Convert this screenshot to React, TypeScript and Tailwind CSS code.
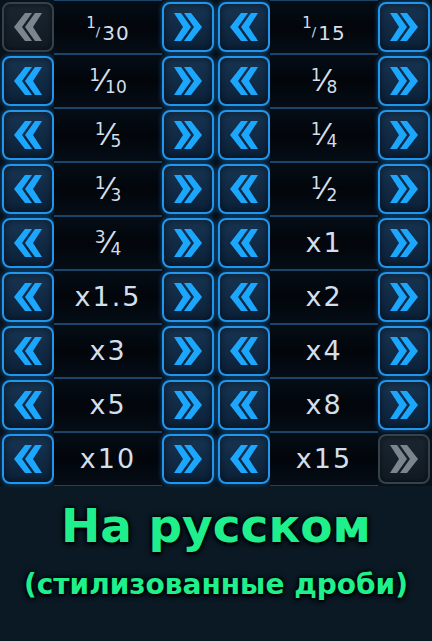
type Frac = { num: string; den: string; small?: boolean };
type Item = { label: string | Frac; prevOff?: boolean; nextOff?: boolean };

const ITEMS: Item[] = [
  { label: { num: "1", den: "30", small: true }, prevOff: true },
  { label: { num: "1", den: "15", small: true } },
  { label: { num: "1", den: "10" } },
  { label: { num: "1", den: "8" } },
  { label: { num: "1", den: "5" } },
  { label: { num: "1", den: "4" } },
  { label: { num: "1", den: "3" } },
  { label: { num: "1", den: "2" } },
  { label: { num: "3", den: "4" } },
  { label: "x1" },
  { label: "x1.5" },
  { label: "x2" },
  { label: "x3" },
  { label: "x4" },
  { label: "x5" },
  { label: "x8" },
  { label: "x10" },
  { label: "x15", nextOff: true },
];

function Chevrons({ dir, off }: { dir: "prev" | "next"; off?: boolean }) {
  const fill = off ? "#7b858e" : "#1ca7ff";
  return (
    <svg width="28" height="30" viewBox="0 0 28 30" className={dir === "next" ? "-scale-x-100" : ""}>
      <polygon points="0,15 11,1 18,1 8,15 18,29 11,29" fill={fill} />
      <polygon points="11,15 21,1 28,1 19,15 28,29 21,29" fill={fill} />
    </svg>
  );
}

function StepButton({ dir, off }: { dir: "prev" | "next"; off?: boolean }) {
  return (
    <button
      className={
        off
          ? "flex h-[50px] w-[52px] shrink-0 items-center justify-center rounded-[8px] border-2 border-[#35414b] bg-gradient-to-b from-[#1b2631] to-[#111a23] shadow-[inset_0_0_6px_rgba(0,0,0,0.6)]"
          : "flex h-[50px] w-[52px] shrink-0 items-center justify-center rounded-[8px] border-2 border-[#2196ee] bg-gradient-to-b from-[#173553] to-[#0c2139] shadow-[0_0_5px_rgba(30,140,230,0.6),inset_0_0_8px_rgba(0,0,0,0.55)]"
      }
    >
      <Chevrons dir={dir} off={off} />
    </button>
  );
}

function Label({ value }: { value: string | Frac }) {
  if (typeof value === "string") {
    return <span className="text-[27px] tracking-[2px] text-[#d3dfea]">{value}</span>;
  }
  if (value.small) {
    return (
      <span className="mt-[4px] flex items-start text-[#d3dfea]">
        <span className="text-[15px] leading-[15px]">{value.num}</span>
        <span className="mt-[9px] text-[13px] leading-[13px]">/</span>
        <span className="mt-[7px] pl-[2px] text-[20px] leading-[20px] tracking-[1px]">{value.den}</span>
      </span>
    );
  }
  // stacked fraction: raised numerator, tall slash, lowered denominator
  return (
    <span className="flex items-start text-[#d3dfea]">
      <span className="mt-[1px] text-[17px] leading-[17px]">{value.num}</span>
      <span className="text-[30px] leading-[30px]">⁄</span>
      <span className="mt-[13px] text-[17px] leading-[17px]">{value.den}</span>
    </span>
  );
}

export default function App() {
  return (
    <main
      className="h-[641px] w-[432px] overflow-hidden bg-[#0a1924]"
      style={{ fontFamily: '"DejaVu Sans", "Noto Sans", sans-serif' }}
    >
      <div className="grid grid-cols-2 bg-[#07121c]">
        {ITEMS.map((item, i) => (
          <div key={i} className="flex h-[54px] items-center px-[2px]">
            <StepButton dir="prev" off={item.prevOff} />
            <div className="flex h-full flex-1 items-center justify-center border-y border-[#1b4568] bg-gradient-to-b from-[#050d16] via-[#02060b] to-[#050d16]">
              <Label value={item.label} />
            </div>
            <StepButton dir="next" off={item.nextOff} />
          </div>
        ))}
      </div>

      <div className="flex flex-col items-center pt-[12px] font-bold text-[#1ff08d] [text-shadow:0_0_3px_#000,0_0_6px_#000,0_2px_4px_#000]">
        <h1 className="text-[47px] leading-[56px]">На русском</h1>
        <p className="mt-[14px] text-[28px] leading-[34px]">(стилизованные дроби)</p>
      </div>
    </main>
  );
}
